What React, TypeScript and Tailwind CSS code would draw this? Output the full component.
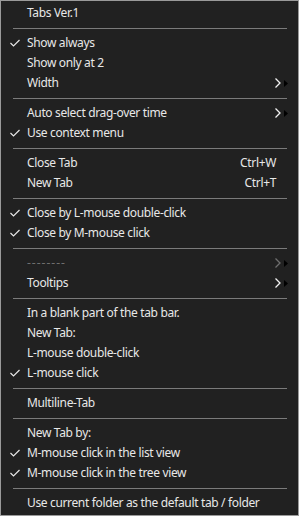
import type { ReactNode } from "react";

type Item =
  | { kind: "sep" }
  | {
      kind: "item";
      label: string;
      checked?: boolean;
      shortcut?: string;
      submenu?: boolean;
      disabled?: boolean;
    };

const items: Item[] = [
  { kind: "item", label: "Tabs Ver.1" },
  { kind: "sep" },
  { kind: "item", label: "Show always", checked: true },
  { kind: "item", label: "Show only at 2" },
  { kind: "item", label: "Width", submenu: true },
  { kind: "sep" },
  { kind: "item", label: "Auto select drag-over time", submenu: true },
  { kind: "item", label: "Use context menu", checked: true },
  { kind: "sep" },
  { kind: "item", label: "Close Tab", shortcut: "Ctrl+W" },
  { kind: "item", label: "New Tab", shortcut: "Ctrl+T" },
  { kind: "sep" },
  { kind: "item", label: "Close by L-mouse double-click", checked: true },
  { kind: "item", label: "Close by M-mouse click", checked: true },
  { kind: "sep" },
  { kind: "item", label: "--------", submenu: true, disabled: true },
  { kind: "item", label: "Tooltips", submenu: true },
  { kind: "sep" },
  { kind: "item", label: "In a blank part of the tab bar." },
  { kind: "item", label: "New Tab:" },
  { kind: "item", label: "L-mouse double-click" },
  { kind: "item", label: "L-mouse click", checked: true },
  { kind: "sep" },
  { kind: "item", label: "Multiline-Tab" },
  { kind: "sep" },
  { kind: "item", label: "New Tab by:" },
  { kind: "item", label: "M-mouse click in the list view", checked: true },
  { kind: "item", label: "M-mouse click in the tree view", checked: true },
  { kind: "sep" },
  { kind: "item", label: "Use current folder as the default tab / folder" },
];

function Check() {
  return (
    <svg width="10" height="8" viewBox="0 0 10 8" fill="none">
      <path d="M0.5 4 L3.5 7 L9.5 1" stroke="#e6e6e6" strokeWidth="1.2" />
    </svg>
  );
}

function SubArrow({ disabled }: { disabled?: boolean }) {
  return (
    <div className="flex items-center gap-[3px]">
      <svg width="6" height="10" viewBox="0 0 6 10" fill="none">
        <path
          d="M0.5 0.5 L5 5 L0.5 9.5"
          stroke={disabled ? "#6f6f6f" : "#f2f2f2"}
          strokeWidth="1.3"
        />
      </svg>
      <svg width="4" height="7" viewBox="0 0 4 7">
        <path d="M0 0 L4 3.5 L0 7 Z" fill="#000" />
      </svg>
    </div>
  );
}

function Row({ children }: { children: ReactNode }) {
  return <div className="flex h-5 items-center">{children}</div>;
}

export default function App() {
  return (
    <div
      className="h-[516px] w-[299px] border border-[#9a9a9a] bg-[#212121] pt-[2px] text-[12px] tracking-[-0.35px] text-[#e8e8e8]"
      style={{ fontFamily: '"Segoe UI", "Noto Sans", "Open Sans", sans-serif' }}
    >
      {items.map((it, i) =>
        it.kind === "sep" ? (
          <div key={i} className="flex h-[10px] items-center pl-[12px] pr-[11px]">
            <div className="h-px w-full bg-[#7b7b7b]" />
          </div>
        ) : (
          <Row key={i}>
            <div className="flex w-[26px] justify-center pl-[2px]">{it.checked && <Check />}</div>
            <span
              className={`flex-1 whitespace-nowrap ${
                it.disabled ? "tracking-[1px] text-[#6f6f6f]" : ""
              }`}
            >
              {it.label}
            </span>
            {it.shortcut && <span className="pr-[22px]">{it.shortcut}</span>}
            {it.submenu && (
              <div className="pr-[10px]">
                <SubArrow disabled={it.disabled} />
              </div>
            )}
          </Row>
        ),
      )}
    </div>
  );
}
